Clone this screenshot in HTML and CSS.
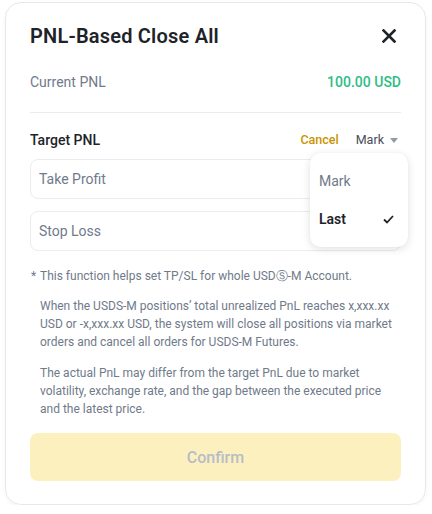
FILE: index.html
```html
<!DOCTYPE html>
<html>
<head>
<meta charset="utf-8">
<link rel="stylesheet" href="styles.css">
</head>
<body>
<div class="card">
  <div class="header">
    <div class="title">PNL-Based Close All</div>
    <svg class="close" width="14" height="14" viewBox="0 0 14 14"><path d="M1.5 1.5 L12.5 12.5 M12.5 1.5 L1.5 12.5" stroke="#1e2329" stroke-width="2.6" stroke-linecap="square" fill="none"/></svg>
  </div>
  <div class="row current">
    <span class="label">Current PNL</span>
    <span class="pnl">100.00 USD</span>
  </div>
  <div class="divider"></div>
  <div class="row target">
    <span class="tlabel">Target PNL</span>
    <div class="actions">
      <span class="cancel">Cancel</span>
      <span class="mark">Mark</span>
      <svg class="caret" width="8" height="5" viewBox="0 0 8 5"><path d="M0 0 H8 L4 5 Z" fill="#929aa5"/></svg>
    </div>
    <div class="menu">
      <div class="item">Mark</div>
      <div class="item active"><span>Last</span>
        <svg width="11" height="9" viewBox="0 0 11 9"><path d="M1 4.5 L4 7.5 L10 1" stroke="#1e2329" stroke-width="1.8" fill="none"/></svg>
      </div>
    </div>
  </div>
  <div class="input tp"><span class="ph">Take Profit</span><span class="val">100</span></div>
  <div class="input sl"><span class="ph">Stop Loss</span></div>
  <div class="notes">
    <p class="first"><span class="star">*</span>This function helps set TP/SL for whole USDⓈ-M Account.</p>
    <p>When the USDS-M positions’ total unrealized PnL reaches x,xxx.xx USD or -x,xxx.xx USD, the system will close all positions via market orders and cancel all orders for USDS-M Futures.</p>
    <p>The actual PnL may differ from the target PnL due to market volatility, exchange rate, and the gap between the executed price and the latest price.</p>
  </div>
  <div class="confirm">Confirm</div>
</div>
</body>
</html>
```
FILE: styles.css
```css
* { box-sizing: border-box; }
html, body { margin: 0; padding: 0; background: #fff; }
body { font-family: Roboto, "Liberation Sans", sans-serif; color: #1e2329; }
.card {
  margin: 2px 6px 0 5px;
  width: 421px;
  height: 503px;
  border: 1px solid #e6e8ea;
  border-radius: 16px;
  box-shadow: 0 2px 4px rgba(0,0,0,0.04);
  padding: 19px 24px 0 24px;
  display: flex;
  flex-direction: column;
}
.header { display: flex; justify-content: space-between; align-items: center; height: 28px; }
.title { font-size: 20px; font-weight: 600; line-height: 28px; letter-spacing: 0.2px; }
.close { margin-right: 5px; }
.row { display: flex; justify-content: space-between; align-items: center; font-size: 14px; line-height: 20px; }
.current { margin-top: 22px; }
.label { color: #707a8a; }
.pnl { color: #2ebd85; font-weight: 500; }
.divider { height: 1px; background: #eaecef; margin-top: 20px; }
.target { margin-top: 17px; position: relative; }
.tlabel { font-weight: 500; }
.actions { display: flex; align-items: center; font-size: 12.5px; }
.cancel { color: #c99400; font-weight: 500; }
.mark { color: #474d57; margin-left: 17px; }
.caret { margin-left: 6px; margin-right: 3px; }
.menu {
  position: absolute;
  right: -7px;
  top: 23px;
  width: 98px;
  height: 94px;
  background: #fff;
  border-radius: 10px;
  box-shadow: 0 2px 8px rgba(0,0,0,0.12), 0 0 1px rgba(0,0,0,0.08);
  padding: 9px 14px 0 9px;
  z-index: 2;
}
.item { height: 38px; display: flex; align-items: center; justify-content: space-between; font-size: 14px; color: #707a8a; }
.item.active { color: #1e2329; font-weight: 600; }
.input {
  height: 40px;
  border: 1px solid #eaecef;
  border-radius: 8px;
  display: flex;
  align-items: center;
  justify-content: space-between;
  padding: 0 12px 0 8px;
  font-size: 14px;
}
.tp { margin-top: 9px; }
.sl { margin-top: 12px; }
.ph { color: #707a8a; }
.val { color: #1e2329; font-weight: 500; }
.notes { margin-top: 16px; font-size: 12px; line-height: 18px; color: #707a8a; padding-left: 10px; }
.notes p { margin: 0 0 13px 0; }
.notes p.first { margin-bottom: 12px; position: relative; }
.star { position: absolute; left: -9px; top: 0; }
.confirm {
  margin-top: 2px;
  height: 48px;
  border-radius: 8px;
  background: #fcf0bf;
  color: #b7bdc6;
  font-size: 16px;
  font-weight: 500;
  display: flex;
  align-items: center;
  justify-content: center;
}
```
